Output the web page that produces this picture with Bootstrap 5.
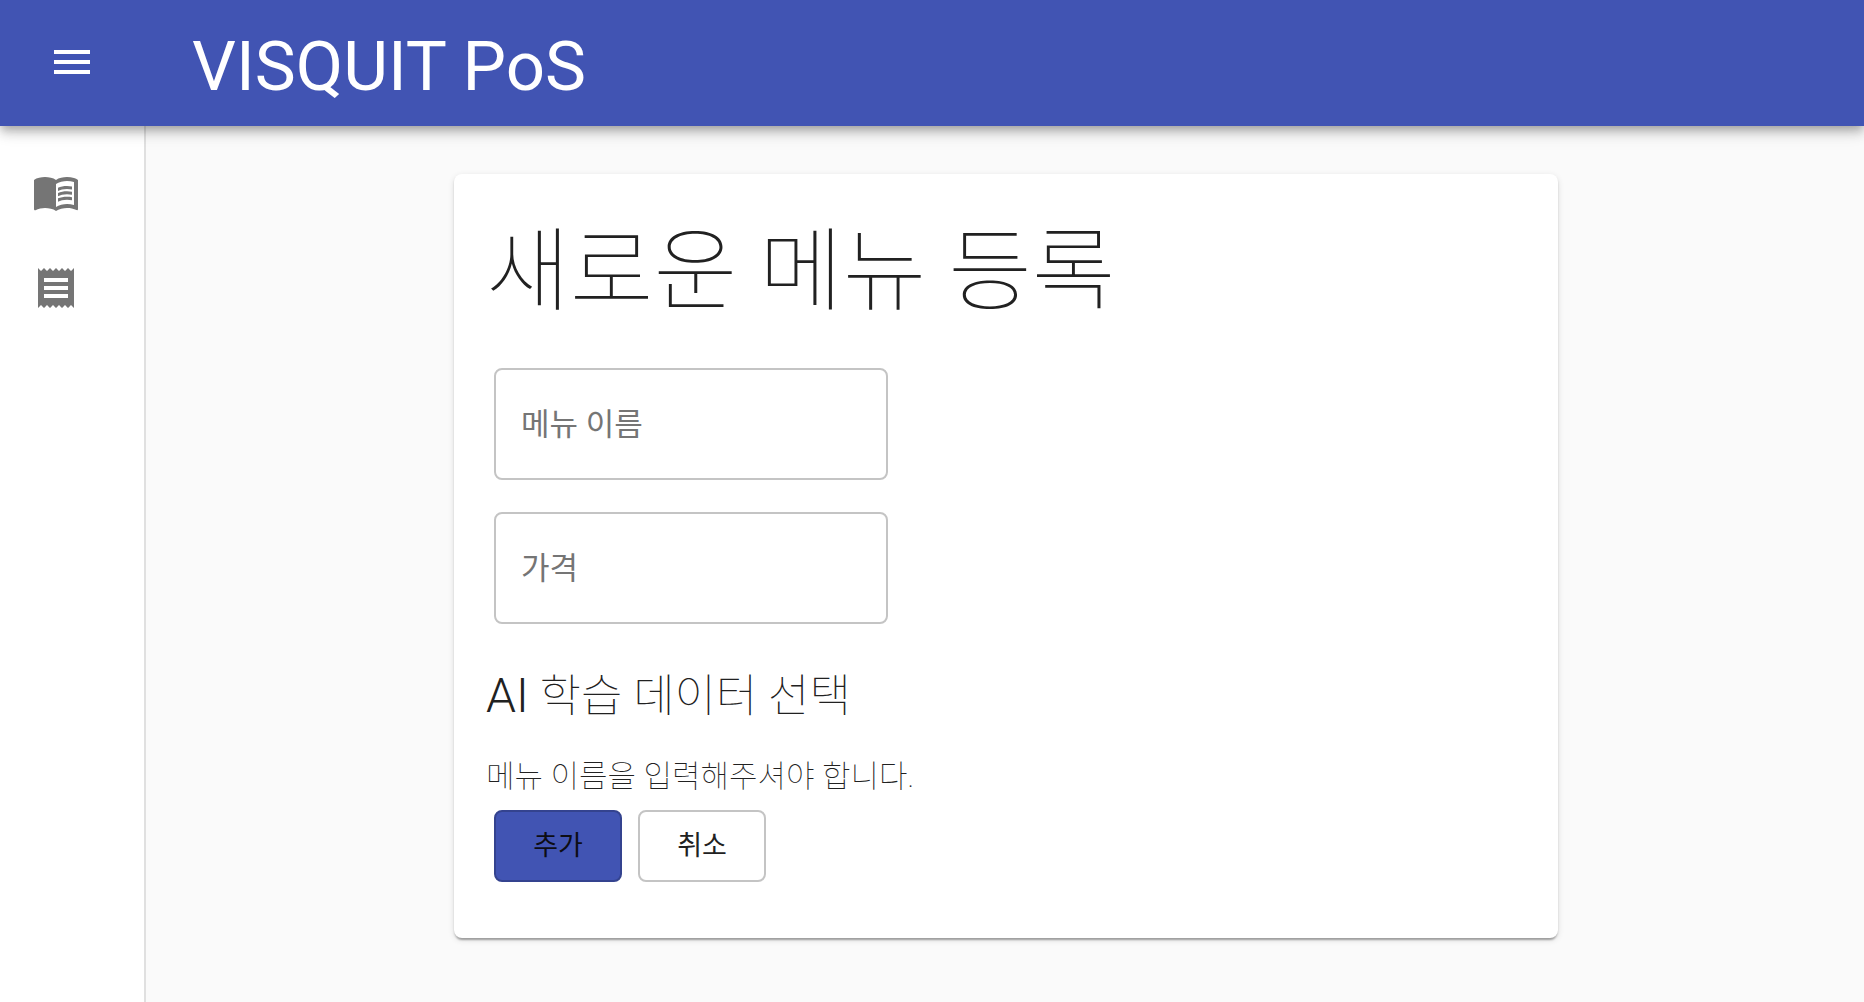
<!DOCTYPE html>
<html lang="ko">
<head>
<meta charset="utf-8">
<meta name="viewport" content="width=device-width, initial-scale=1">
<title>VISQUIT PoS</title>
<link href="https://cdn.jsdelivr.net/npm/bootstrap@5.3.0/dist/css/bootstrap.min.css" rel="stylesheet">
<style>
  body { font-family: Roboto, "Noto Sans CJK KR", sans-serif; background: #fafafa; color: #212121; }
  .topbar { height: 126px; padding: 0 48px 2px; background: #4154b3; z-index: 3;
    box-shadow: 0 4px 8px -2px rgba(0,0,0,.2), 0 8px 10px 0 rgba(0,0,0,.14), 0 2px 20px 0 rgba(0,0,0,.12); }
  .icon-48 { width: 48px; height: 48px; display: block; fill: currentColor; }
  .menu-toggle { color: #fff; margin-right: 96px; }
  .app-name { font-size: 69px; line-height: 80px; padding-top: 10px; }
  .side { width: 146px; border-right: 2px solid #e0e0e0; padding: 42px 32px; gap: 48px; }
  .side a { color: #757575; }
  .content { padding: 48px 46px 48px 48px; }
  .panel { max-width: 1104px; border: 0; border-radius: 8px; padding: 32px;
    box-shadow: 0 4px 2px -2px rgba(0,0,0,.2), 0 2px 2px 0 rgba(0,0,0,.14), 0 2px 6px 0 rgba(0,0,0,.12); }
  .thin { font-weight: 100; }
  .title-xl { font-size: 91px; line-height: 132px; margin-bottom: 30px; }
  .title-md { font-size: 45px; line-height: 64px; margin: 40px 0 24px; }
  .latin { font-size: 48px; font-weight: 300; }
  .note { font-size: 31px; line-height: 48px; margin-bottom: 9px; }
  .fields { gap: 32px; padding: 0 8px; }
  .field { max-width: 394px; }
  .field > .form-control { height: 112px; border: 2px solid #c4c4c4; border-radius: 8px; font-size: 31px; padding: 40px 26px 16px; }
  .field > label { padding: 30px 26px; font-size: 31px; line-height: 52px; color: #757575; }
  .actions { gap: 16px; padding: 0 8px 24px; }
  .actions .btn { width: 128px; height: 72px; border-width: 2px; border-radius: 8px; font-size: 27px; line-height: 1; padding: 0; }
  .btn-add { background: #4154b3; border-color: #34438f; color: #0d0d14; }
  .btn-cancel { border-color: #c4c4c4; color: #212121; }
</style>
</head>
<body>
<div class="d-flex flex-column min-vh-100">
  <header class="topbar d-flex align-items-center position-relative">
    <button type="button" class="btn border-0 p-0 menu-toggle" aria-label="메뉴 열기">
      <svg class="icon-48" viewBox="0 0 24 24" aria-hidden="true"><path d="M3 18h18v-2H3v2zm0-5h18v-2H3v2zm0-7v2h18V6H3z"/></svg>
    </button>
    <span class="app-name text-white">VISQUIT PoS</span>
  </header>
  <div class="d-flex flex-grow-1">
    <nav class="side d-flex flex-column flex-shrink-0 bg-white" aria-label="주 메뉴">
      <a href="#menu" aria-label="메뉴">
        <svg class="icon-48" viewBox="0 0 24 24" aria-hidden="true"><path d="M21 5c-1.110-.35-2.330-.5-3.500-.5-1.950 0-4.050.4-5.500 1.500-1.450-1.100-3.550-1.500-5.500-1.500S2.450 4.900 1 6v14.650c0 .25.25.5.5.5.1 0 .15-.05.25-.05C3.100 20.450 5.050 20 6.500 20c1.950 0 4.050.4 5.500 1.500 1.350-.85 3.800-1.500 5.500-1.500 1.650 0 3.350.3 4.750 1.050.1.05.15.05.25.05.25 0 .5-.25.5-.5V6c-.6-.45-1.250-.75-2-1zm0 13.500c-1.100-.35-2.300-.5-3.500-.5-1.700 0-4.150.65-5.500 1.500V8c1.350-.85 3.800-1.500 5.500-1.500 1.200 0 2.400.15 3.500.5v11.500z"/><path d="M17.500 10.500c.88 0 1.730.09 2.500.26V9.240c-.79-.15-1.640-.24-2.500-.24-1.700 0-3.240.29-4.500.83v1.660c1.130-.64 2.700-.99 4.500-.99zM13 12.490v1.660c1.130-.64 2.700-.99 4.500-.99.88 0 1.730.09 2.500.26V11.900c-.79-.15-1.640-.24-2.500-.24-1.700 0-3.240.3-4.500.83zM17.500 14.330c-1.700 0-3.240.29-4.500.83v1.660c1.130-.64 2.700-.99 4.500-.99.88 0 1.730.09 2.500.26v-1.520c-.79-.16-1.640-.24-2.500-.24z"/></svg>
      </a>
      <a href="#orders" aria-label="주문 내역">
        <svg class="icon-48" viewBox="0 0 24 24" aria-hidden="true"><path d="M18 17H6v-2h12v2zm0-4H6v-2h12v2zm0-4H6V7h12v2zM3 22l1.500-1.500L6 22l1.500-1.500L9 22l1.500-1.500L12 22l1.500-1.500L15 22l1.500-1.500L18 22l1.500-1.500L21 22V2l-1.500 1.500L18 2l-1.500 1.500L15 2l-1.500 1.500L12 2l-1.500 1.500L9 2 7.500 3.500 6 2 4.500 3.500 3 2v20z"/></svg>
      </a>
    </nav>
    <main class="content flex-grow-1">
      <form class="panel card mx-auto">
        <h1 class="title-xl thin">새로운 메뉴 등록</h1>
        <div class="fields d-flex flex-column">
          <div class="field form-floating">
            <input type="text" class="form-control" id="menuName" placeholder=" ">
            <label for="menuName">메뉴 이름</label>
          </div>
          <div class="field form-floating">
            <input type="text" class="form-control" id="menuPrice" inputmode="numeric" placeholder=" ">
            <label for="menuPrice">가격</label>
          </div>
        </div>
        <h2 class="title-md thin"><span class="latin">AI</span> 학습 데이터 선택</h2>
        <p class="note thin">메뉴 이름을 입력해주셔야 합니다.</p>
        <div class="actions d-flex">
          <button type="submit" class="btn btn-add">추가</button>
          <button type="button" class="btn btn-cancel">취소</button>
        </div>
      </form>
    </main>
  </div>
</div>
<script src="https://cdn.jsdelivr.net/npm/bootstrap@5.3.0/dist/js/bootstrap.bundle.min.js"></script>
</body>
</html>
